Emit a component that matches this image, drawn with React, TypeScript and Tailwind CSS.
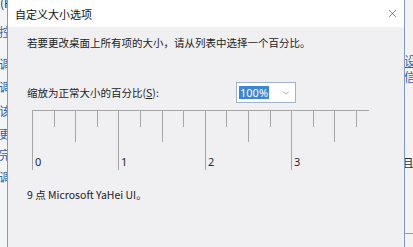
import { X, ChevronDown } from "lucide-react";

const font = { fontFamily: '"Noto Sans CJK SC", "Noto Sans", sans-serif' };

const leftChars = [
	{ t: "控", top: 26 },
	{ t: "调", top: 58 },
	{ t: "调", top: 81 },
	{ t: "该", top: 105 },
	{ t: "更", top: 128 },
	{ t: "完", top: 149 },
	{ t: "调", top: 171 },
];

function Ruler() {
	const ticks = Array.from({ length: 16 }, (_, i) => i);
	const step = 21.6;
	return (
		<svg width="338" height="62" className="block">
			<line x1="0" y1="0.5" x2="337" y2="0.5" stroke="#a6a6a6" strokeWidth="1" />
			{ticks.map((i) => {
				const x = Math.round(i * step) + 0.5;
				const len = i % 4 === 0 ? 60 : i % 2 === 0 ? 32 : 17;
				return (
					<line key={i} x1={x} y1="0" x2={x} y2={len} stroke="#a6a6a6" strokeWidth="1" />
				);
			})}
			{[0, 1, 2, 3].map((n) => (
				<text
					key={n}
					x={Math.round(n * 4 * step) + 3}
					y="56"
					fontSize="11"
					fill="#2b2b2b"
					fontFamily="Noto Sans, sans-serif"
				>
					{n}
				</text>
			))}
		</svg>
	);
}

export default function App() {
	return (
		<div className="w-[413px] h-[247px] flex overflow-hidden bg-[#f4f5f7]" style={font}>
			{/* window behind, left edge */}
			<div className="w-[7px] relative overflow-hidden text-[12px] text-[#2f62b0] leading-none">
				<span className="absolute left-0 top-[-3px] text-[#333]">(H</span>
				{leftChars.map((c, i) => (
					<span key={i} className="absolute left-[-1px]" style={{ top: c.top }}>
						{c.t}
					</span>
				))}
			</div>

			{/* dialog */}
			<div className="w-[398px] h-full flex flex-col border-l border-r border-[#7f9cc0] bg-[#f0eff2]">
				<div className="h-[27px] bg-white flex items-center justify-between pl-[7px] pr-[5px] pt-[2px] shrink-0">
					<span className="text-[11px] text-[#111] leading-none">自定义大小选项</span>
					<X size={13} strokeWidth={1.1} className="text-[#333] -mt-[2px]" />
				</div>

				<div className="pl-[19px] pt-[9px] text-[10.5px] text-[#1c1c1c] leading-[14px]">
					<p>若要更改桌面上所有项的大小，请从列表中选择一个百分比。</p>

					<div className="flex items-center mt-[32px]">
						<p className="w-[209px]">
							缩放为正常大小的百分比(<span className="underline">S</span>):
						</p>
						<div className="w-[60px] h-[21px] bg-white border border-[#9fb4cc] flex items-center pl-[2px] pr-[4px] justify-between">
							<span className="bg-[#3c86d6] text-white px-[1px] leading-[13px] text-[11px]" style={{ fontFamily: '"Noto Sans", sans-serif' }}>
								100%
							</span>
							<ChevronDown size={10} strokeWidth={1.3} className="text-[#666]" />
						</div>
					</div>

					<div className="mt-[7px] ml-[5px]">
						<Ruler />
					</div>

					<p className="mt-[16px]">9 点 Microsoft YaHei UI。</p>
				</div>
			</div>

			{/* window behind, right edge */}
			<div className="w-[8px] relative overflow-hidden text-[12px] leading-none bg-[#f3f3f3]">
				<span className="absolute left-[-1px] top-[55px] text-[#2f62b0] underline">设</span>
				<span className="absolute left-[-1px] top-[71px] text-[#2f62b0]">信</span>
				<span className="absolute left-[-3px] top-[157px] text-[#333]">且</span>
				<div className="absolute left-0 right-0 top-[233px] h-px bg-[#9a9a9a]" />
			</div>
		</div>
	);
}
